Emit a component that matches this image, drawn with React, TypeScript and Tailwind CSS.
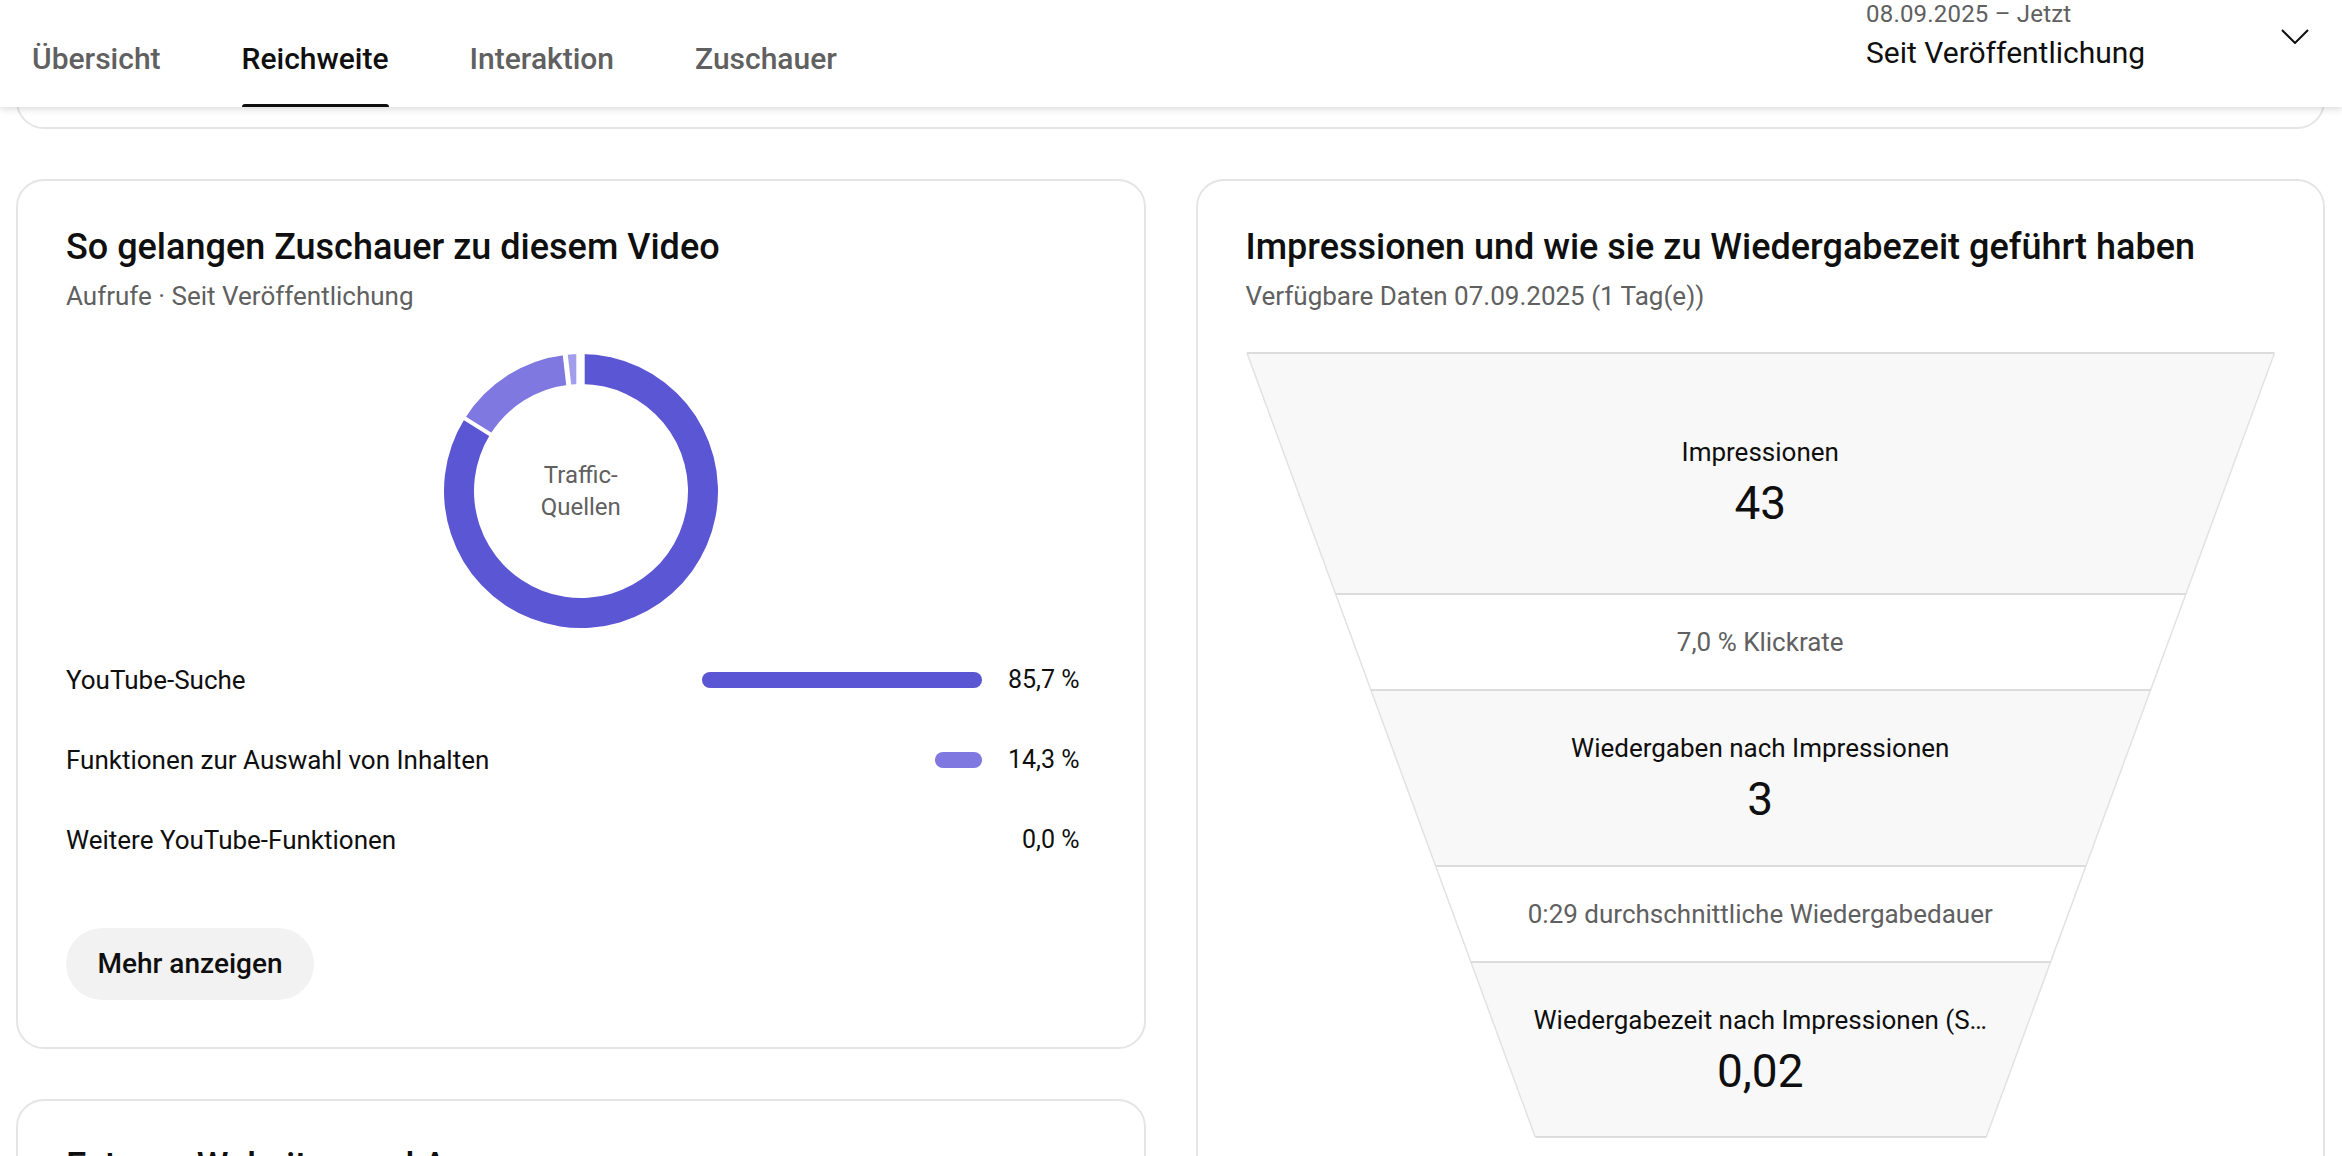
import React from "react";

const MAIN = "#5b56d4";
const SECOND = "#7f78e0";
const THIRD = "#a39eeb";

function polar(cx: number, cy: number, r: number, deg: number): [number, number] {
  const a = ((deg - 90) * Math.PI) / 180;
  return [cx + r * Math.cos(a), cy + r * Math.sin(a)];
}

function ringPath(cx: number, cy: number, rO: number, rI: number, a0: number, a1: number) {
  const [x0, y0] = polar(cx, cy, rO, a0);
  const [x1, y1] = polar(cx, cy, rO, a1);
  const [x2, y2] = polar(cx, cy, rI, a1);
  const [x3, y3] = polar(cx, cy, rI, a0);
  const large = a1 - a0 > 180 ? 1 : 0;
  return `M${x0} ${y0} A${rO} ${rO} 0 ${large} 1 ${x1} ${y1} L${x2} ${y2} A${rI} ${rI} 0 ${large} 0 ${x3} ${y3} Z`;
}

function Donut() {
  const c = 137;
  const gap = (deg: number, w: number, dx = 0) => {
    const [x, y] = polar(c + dx, c, 150, deg);
    return <line x1={c + dx} y1={c} x2={x} y2={y} stroke="#ffffff" strokeWidth={w} />;
  };
  return (
    <div className="grid w-[274px] h-[274px]">
      <svg className="col-start-1 row-start-1" width="274" height="274" viewBox="0 0 274 274">
        <path d={ringPath(c, c, 137, 107, 0, 302)} fill={MAIN} />
        <path d={ringPath(c, c, 137, 107, 302, 353.4)} fill={SECOND} />
        <path d={ringPath(c, c, 137, 107, 353.4, 359.99)} fill={THIRD} />
        {gap(302, 4)}
        {gap(353.4, 5)}
        {gap(0, 8.4, -0.5)}
      </svg>
      <div className="col-start-1 row-start-1 flex flex-col items-center justify-center text-[24px] leading-[32px] text-[#606060]">
        <span>Traffic-</span>
        <span>Quellen</span>
      </div>
    </div>
  );
}

const rows = [
  { label: "YouTube-Suche", value: 85.7, text: "85,7 %", color: "bg-[#5b56d4]" },
  { label: "Funktionen zur Auswahl von Inhalten", value: 14.3, text: "14,3 %", color: "bg-[#7f78e0]" },
  { label: "Weitere YouTube-Funktionen", value: 0, text: "0,0 %", color: "bg-[#a39eeb]" },
];

function TrafficCard() {
  return (
    <div className="border-2 border-[#e5e5e5] rounded-[28px] px-[48px] pt-[44px] pb-[47px]">
      <div className="text-[36px] leading-[44px] font-medium whitespace-nowrap">So gelangen Zuschauer zu diesem Video</div>
      <div className="mt-[11px] text-[26px] leading-[32px] text-[#606060]">Aufrufe · Seit Veröffentlichung</div>
      <div className="mt-[42px] flex justify-center">
        <Donut />
      </div>
      <div className="mt-[12px] flex flex-col">
        {rows.map((r) => (
          <div key={r.label} className="flex items-center h-[80px] pr-[16px]">
            <div className="flex-1 text-[26px] leading-[32px]">{r.label}</div>
            <div className="w-[326px] flex justify-end">
              {r.value > 0 && (
                <div className={`h-[16px] rounded-full ${r.color}`} style={{ width: `${(r.value / 100) * 326}px` }} />
              )}
            </div>
            <div className="ml-[20px] w-[78px] text-right text-[25px] leading-[32px] whitespace-nowrap">{r.text}</div>
          </div>
        ))}
      </div>
      <button className="mt-[48px] h-[72px] w-[248px] rounded-full bg-[#f2f2f2] text-[28px] font-medium text-[#0f0f0f] flex items-center justify-center">
        Mehr anzeigen
      </button>
    </div>
  );
}

const W = 1029;
const xl = (y: number) => 1 + 0.3675 * (y - 1);
const xr = (y: number) => W - 1 - 0.3675 * (y - 1);
const bounds = [1, 242, 338, 514, 610, 785];

function FunnelShape() {
  const polys = [];
  for (let i = 0; i < 5; i++) {
    const a = bounds[i];
    const b = bounds[i + 1];
    polys.push(
      <polygon
        key={i}
        points={`${xl(a)},${a} ${xr(a)},${a} ${xr(b)},${b} ${xl(b)},${b}`}
        fill={i % 2 === 0 ? "#f8f8f8" : "#ffffff"}
      />
    );
  }
  return (
    <svg className="absolute inset-0" width="100%" height="100%" viewBox={`0 0 ${W} 786`} preserveAspectRatio="none">
      {polys}
      <line x1={xl(1)} y1={1} x2={xl(785)} y2={785} stroke="#e2e2e2" strokeWidth="1.5" />
      <line x1={xr(1)} y1={1} x2={xr(785)} y2={785} stroke="#e2e2e2" strokeWidth="1.5" />
      {bounds.map((y) => (
        <line key={y} x1={xl(y)} y1={y} x2={xr(y)} y2={y} stroke="#dcdcdc" strokeWidth="2" />
      ))}
    </svg>
  );
}

function FunnelCard() {
  return (
    <div className="border-2 border-[#e5e5e5] rounded-[28px] px-[48px] pt-[44px] h-[1300px]">
      <div className="text-[36px] leading-[44px] font-medium whitespace-nowrap">
        Impressionen und wie sie zu Wiedergabezeit geführt haben
      </div>
      <div className="mt-[11px] text-[26px] leading-[32px] text-[#606060]">Verfügbare Daten 07.09.2025 (1 Tag(e))</div>
      <div className="mt-[40px] relative h-[786px]">
        <FunnelShape />
        <div className="relative flex flex-col items-stretch text-center">
          <div className="h-[242px] pt-[18px] flex flex-col items-center justify-center">
            <div className="text-[26px] leading-[32px]">Impressionen</div>
            <div className="mt-[9px] text-[46px] leading-[52px]">43</div>
          </div>
          <div className="h-[96px] flex items-center justify-center text-[26px] leading-[32px] text-[#606060]">
            7,0 % Klickrate
          </div>
          <div className="h-[176px] flex flex-col items-center justify-center">
            <div className="text-[26px] leading-[32px]">Wiedergaben nach Impressionen</div>
            <div className="mt-[9px] text-[46px] leading-[52px]">3</div>
          </div>
          <div className="h-[96px] flex items-center justify-center text-[26px] leading-[32px] text-[#606060]">
            0:29 durchschnittliche Wiedergabedauer
          </div>
          <div className="h-[176px] flex flex-col items-center justify-center">
            <div className="text-[26px] leading-[32px] whitespace-nowrap">Wiedergabezeit nach Impressionen (S…</div>
            <div className="mt-[9px] text-[46px] leading-[52px]">0,02</div>
          </div>
        </div>
      </div>
    </div>
  );
}

const tabs = ["Übersicht", "Reichweite", "Interaktion", "Zuschauer"];

function Header() {
  return (
    <div className="relative z-10 h-[107px] bg-white shadow-[0_3px_6px_rgba(0,0,0,0.12)] flex justify-between pl-[32px] pr-[33px]">
      <div className="flex gap-[81px] h-full">
        {tabs.map((t) => {
          const active = t === "Reichweite";
          return (
            <div key={t} className="flex flex-col h-full">
              <div
                className={
                  active
                    ? "pt-[41px] text-[30px] leading-[36px] font-medium text-[#0f0f0f]"
                    : "pt-[41px] text-[30px] leading-[36px] font-medium text-[#606060]"
                }
              >
                {t}
              </div>
              <div className="flex-1" />
              <div className={active ? "h-[3px] rounded-t-[3px] bg-[#0f0f0f]" : "h-[3px]"} />
            </div>
          );
        })}
      </div>
      <div className="flex items-start">
        <div className="w-[415px] flex flex-col">
          <div className="text-[24px] leading-[28px] tracking-[0.2px] text-[#606060]">08.09.2025 – Jetzt</div>
          <div className="mt-[7px] text-[30px] leading-[36px] text-[#0f0f0f]">Seit Veröffentlichung</div>
        </div>
        <svg className="mt-[29px]" width="28" height="15" viewBox="0 0 28 15">
          <polyline points="1,1 14,14 27,1" fill="none" stroke="#0f0f0f" strokeWidth="2" />
        </svg>
      </div>
    </div>
  );
}

export default function App() {
  return (
    <div className="w-[2342px] h-[1156px] overflow-hidden bg-white font-['Roboto',sans-serif] text-[#0f0f0f]">
      <Header />
      <div className="pl-[16px] pr-[17px]">
        <div className="h-[22px] overflow-hidden flex flex-col justify-end">
          <div className="h-[80px] shrink-0 border-2 border-[#e5e5e5] rounded-[28px]" />
        </div>
        <div className="mt-[50px] flex gap-[50px] items-start">
          <div className="flex-1 min-w-0 flex flex-col gap-[50px]">
            <TrafficCard />
            <div className="border-2 border-[#e5e5e5] rounded-[28px] px-[48px] pt-[43px] h-[400px]">
              <div className="text-[36px] leading-[44px] font-medium whitespace-nowrap">Externe Websites und Apps</div>
            </div>
          </div>
          <div className="flex-1 min-w-0">
            <FunnelCard />
          </div>
        </div>
      </div>
    </div>
  );
}
